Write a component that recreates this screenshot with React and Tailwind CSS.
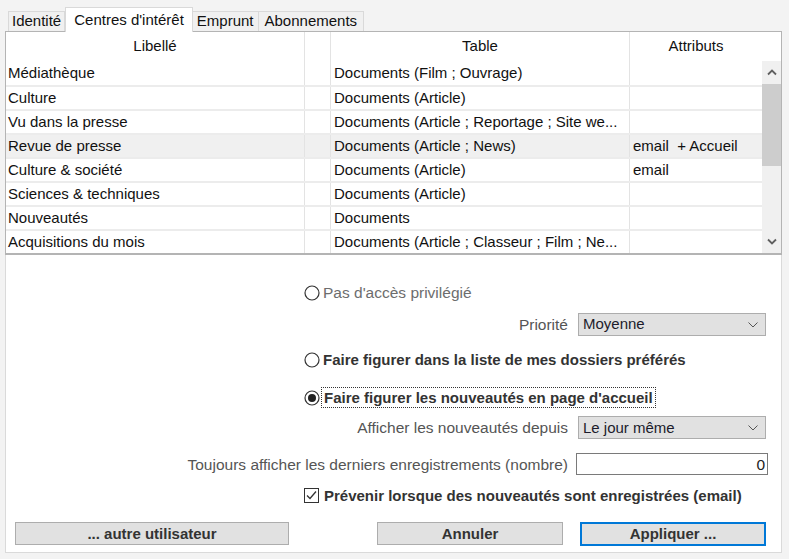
import React from 'react';

const rows = [
  { lib: 'Médiathèque', table: 'Documents (Film ; Ouvrage)', attr: '' },
  { lib: 'Culture', table: 'Documents (Article)', attr: '' },
  { lib: 'Vu dans la presse', table: 'Documents (Article ; Reportage ; Site we...', attr: '' },
  { lib: 'Revue de presse', table: 'Documents (Article ; News)', attr: 'email  + Accueil', sel: true },
  { lib: 'Culture & société', table: 'Documents (Article)', attr: 'email' },
  { lib: 'Sciences & techniques', table: 'Documents (Article)', attr: '' },
  { lib: 'Nouveautés', table: 'Documents', attr: '' },
  { lib: 'Acquisitions du mois', table: 'Documents (Article ; Classeur ; Film ; Ne...', attr: '' },
];

function Radio({ checked }) {
  return (
    <svg width="16" height="16" viewBox="0 0 16 16" className="shrink-0">
      <circle cx="8" cy="8" r="7" fill="white" stroke="#333" strokeWidth="1.2" />
      {checked && <circle cx="8" cy="8" r="4" fill="#222" />}
    </svg>
  );
}

function Chevron() {
  return (
    <svg width="12" height="8" viewBox="0 0 12 8">
      <path d="M1.5 1.5 L6 6 L10.5 1.5" fill="none" stroke="#555" strokeWidth="1" />
    </svg>
  );
}

function Select({ value }) {
  return (
    <div className="w-[188px] h-[23px] bg-[#e1e1e1] border border-[#adadad] flex items-center justify-between pl-[4px] pr-[6px] text-[#1c1c2c] text-[15px]">
      <span>{value}</span>
      <Chevron />
    </div>
  );
}

export default function App() {
  return (
    <div className="w-[789px] h-[559px] bg-[#f3f3f3] pt-[7px] text-[#111]" style={{ fontFamily: "'Liberation Sans', Arial, sans-serif" }}>
      {/* tabs */}
      <div className="flex items-end pl-[8px] h-[24px] text-[15px] relative z-10">
        <div className="h-[20px] px-[3px] border border-b-0 border-[#d9d9d9] bg-[#f0f0f0] flex items-center">Identité</div>
        <div className="h-[25px] px-[8px] border border-b-0 border-[#d9d9d9] bg-white flex items-center mb-[-1px]">Centres d'intérêt</div>
        <div className="h-[20px] px-[4px] border border-b-0 border-l-0 border-[#d9d9d9] bg-[#f0f0f0] flex items-center">Emprunt</div>
        <div className="h-[20px] px-[6px] border border-b-0 border-l-0 border-[#d9d9d9] bg-[#f0f0f0] flex items-center">Abonnements</div>
      </div>

      {/* panel */}
      <div className="ml-[5px] w-[777px] h-[522px] bg-white border-l border-r border-b border-[#dadada] flex flex-col">
        {/* table */}
        <div className="-ml-px -mr-px border-t border-l border-r border-b-2 border-[#b4b4b4] text-[15px]">
          <div className="flex h-[29px]">
            <div className="w-[299px] border-r border-[#e3e3e3] flex items-center justify-center">Libellé</div>
            <div className="w-[26px] border-r border-[#e3e3e3]" />
            <div className="w-[299px] border-r border-[#e3e3e3] flex items-center justify-center">Table</div>
            <div className="w-[132px] flex items-center justify-center">Attributs</div>
          </div>
          <div className="flex">
            <div className="w-[756px]">
              {rows.map((r, i) => (
                <div key={i} className={`flex h-[24px] ${i > 0 ? 'border-t-2 border-[#ececec]' : ''} ${r.sel ? 'bg-[#f0f0f0]' : ''}`}>
                  <div className="w-[299px] border-r border-[#e3e3e3] pl-[2px] flex items-center whitespace-nowrap">{r.lib}</div>
                  <div className="w-[26px] border-r border-[#e3e3e3]" />
                  <div className="w-[299px] border-r border-[#e3e3e3] pl-[3px] flex items-center whitespace-nowrap overflow-hidden">{r.table}</div>
                  <div className="w-[132px] pl-[3px] flex items-center whitespace-pre">{r.attr}</div>
                </div>
              ))}
            </div>
            <div className="w-[19px] bg-[#f0f0f0] flex flex-col">
              <div className="h-[23px] flex items-center justify-center">
                <svg width="10" height="7" viewBox="0 0 10 7"><path d="M1 5.5 L5 1.5 L9 5.5" fill="none" stroke="#606060" strokeWidth="1.8" /></svg>
              </div>
              <div className="h-[82px] bg-[#cdcdcd]" />
              <div className="flex-1" />
              <div className="h-[23px] flex items-center justify-center">
                <svg width="10" height="7" viewBox="0 0 10 7"><path d="M1 1.5 L5 5.5 L9 1.5" fill="none" stroke="#606060" strokeWidth="1.8" /></svg>
              </div>
            </div>
          </div>
        </div>

        {/* options */}
        <div className="flex flex-col text-[15.5px] text-[#3c3c3c] pr-[15px] whitespace-nowrap">
          <div className="mt-[28px] pl-[298px] flex items-center h-[20px] gap-[3px] text-[#6d6d6d]">
            <Radio />
            <span>Pas d'accès privilégié</span>
          </div>
          <div className="mt-[10px] flex items-center justify-end gap-[10px] text-[#555]">
            <span>Priorité</span>
            <Select value="Moyenne" />
          </div>
          <div className="mt-[14px] pl-[298px] flex items-center h-[20px] gap-[3px] font-bold text-[#333] text-[15px]">
            <Radio />
            <span>Faire figurer dans la liste de mes dossiers préférés</span>
          </div>
          <div className="mt-[17px] pl-[298px] flex items-center h-[21px] gap-[1px] font-bold text-[#333] text-[15px]">
            <Radio checked />
            <span className="border border-dotted border-[#333] px-[2px] leading-[19px]">Faire figurer les nouveautés en page d'accueil</span>
          </div>
          <div className="mt-[8px] flex items-center justify-end gap-[10px] text-[#555]">
            <span>Afficher les nouveautés depuis</span>
            <Select value="Le jour même" />
          </div>
          <div className="mt-[13px] flex items-center justify-end gap-[8px] text-[#555] -mr-[2px]">
            <span>Toujours afficher les derniers enregistrements (nombre)</span>
            <div className="w-[192px] h-[22px] border border-[#7a7a7a] bg-white flex items-center justify-end pr-[2px] text-[#222]">0</div>
          </div>
          <div className="mt-[11px] pl-[298px] flex items-center h-[18px] gap-[5px] font-bold text-[#333] text-[15px]">
            <svg width="15" height="15" viewBox="0 0 15 15" className="shrink-0">
              <rect x="0.5" y="0.5" width="14" height="14" fill="white" stroke="#333" />
              <path d="M3 7.5 L6 10.5 L12 3.5" fill="none" stroke="#333" strokeWidth="1.3" />
            </svg>
            <span>Prévenir lorsque des nouveautés sont enregistrées (email)</span>
          </div>
          <div className="mt-[17px] flex items-center pl-[9px] font-bold text-[#333] text-[15px]">
            <div className="w-[274px] h-[23px] bg-[#e1e1e1] border border-[#adadad] flex items-center justify-center">... autre utilisateur</div>
            <div className="ml-[88px] w-[186px] h-[23px] bg-[#e1e1e1] border border-[#adadad] flex items-center justify-center">Annuler</div>
            <div className="ml-[17px] w-[186px] h-[24px] bg-[#e1e1e1] border-2 border-[#0078d7] flex items-center justify-center">Appliquer ...</div>
          </div>
        </div>
      </div>
    </div>
  );
}
